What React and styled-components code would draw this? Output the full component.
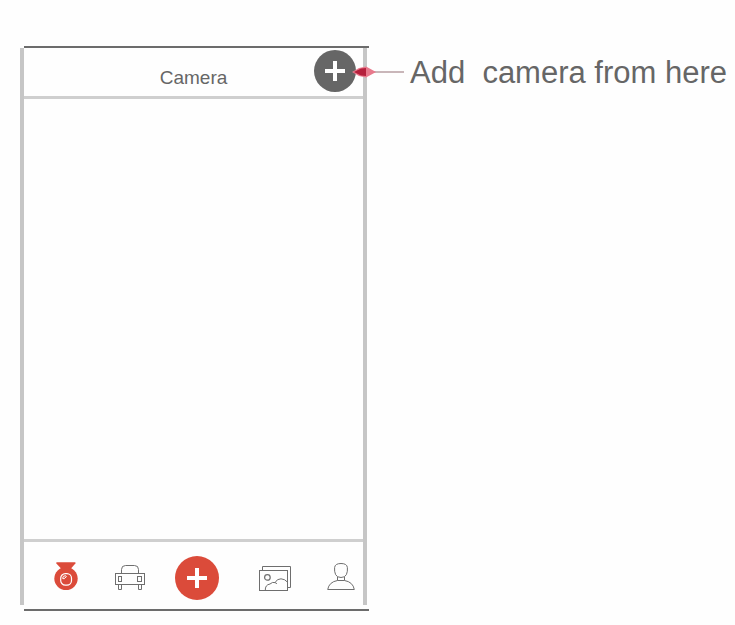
import React from "react";
import styled, { createGlobalStyle } from "styled-components";

function CameraIcon() {
  return (
    <Drawing width="24" height="32" viewBox="0 0 24 32" aria-hidden="true">
      <g fill="#db4b3a">
        <path d="M2.4 0.2H21.4V1.6L17 6.4H7L2.4 1.6Z" />
        <ellipse cx="12" cy="16.6" rx="11.7" ry="11.5" />
      </g>
      <g fill="none" stroke="#fff">
        <rect x="6.7" y="11.7" width="10.8" height="11.4" rx="4.6" strokeWidth="1.2" />
        <path d="M8.6 16.4Q8.8 13.6 11.6 13.7Q12.8 14 12 15.2Q10.6 15.6 10.2 16.8Z" strokeWidth="1" />
      </g>
    </Drawing>
  );
}

function CarIcon() {
  return (
    <Drawing width="30" height="32" viewBox="0 0 30 32" aria-hidden="true">
      <g fill="none" stroke="#6e6e6e" strokeWidth="1">
        <path d="M6.5 11.5V7.5Q6.5 3.5 10.5 3.5H19.5Q23.5 3.5 23.5 7.5V11.5" />
        <rect x="0.5" y="11.5" width="29" height="11" />
        <rect x="3.5" y="14.5" width="3" height="5" />
        <rect x="22.5" y="14.5" width="4" height="5" />
        <path d="M3.5 22.5V27.5H6.5V22.5M23.5 22.5V27.5H26.5V22.5" />
      </g>
    </Drawing>
  );
}

function GalleryIcon() {
  return (
    <Drawing width="32" height="32" viewBox="0 0 32 32" aria-hidden="true">
      <g fill="none" stroke="#6e6e6e" strokeWidth="1">
        <path d="M3.5 8.5V4.5H31.5V25.5H28.5" />
        <rect x="0.5" y="8.5" width="28" height="20" />
        <circle cx="8.4" cy="15.4" r="2.8" strokeWidth="1.2" />
        <path d="M6.3 28.5Q6 22.8 11 22Q13.6 19.6 16 20.6Q18 16.7 22 16.8Q26 17 28.5 20.2M16 20.6Q17.4 21 18 22" />
      </g>
    </Drawing>
  );
}

function PersonIcon() {
  return (
    <Drawing width="28" height="32" viewBox="0 0 28 32" aria-hidden="true">
      <g fill="none" stroke="#6e6e6e" strokeWidth="1">
        <path d="M7.6 5.6Q8 1.5 14 1.5T20.4 5.6Q20.8 9.4 19.4 12.6Q18 15.5 14 15.5T8.6 12.6Q7.2 9.4 7.6 5.6Z" />
        <path d="M10.5 15V18.5H17.5V15" />
        <path d="M10.5 18.5Q2 20 0.7 27.5H27.3Q26 20 17.5 18.5" />
      </g>
    </Drawing>
  );
}

function PlusIcon() {
  return (
    <Drawing width="20" height="20" viewBox="0 0 20 20" aria-hidden="true">
      <path d="M10 0V20M0 10H20" stroke="#fff" strokeWidth="4" />
    </Drawing>
  );
}

function App() {
  return (
    <Page>
      <GlobalStyle />
      <Phone>
        <Edge />
        <Screen>
          <Header>
            <Title>Camera</Title>
            <RoundButton type="button" $color="#666666" $align="end" aria-label="Add camera">
              <PlusIcon />
            </RoundButton>
          </Header>
          <Content />
          <TabBar>
            <TabButton type="button" aria-label="Cameras">
              <CameraIcon />
            </TabButton>
            <TabButton type="button" aria-label="Vehicles">
              <CarIcon />
            </TabButton>
            <RoundButton type="button" $color="#db4b3a" aria-label="Add">
              <PlusIcon />
            </RoundButton>
            <TabButton type="button" aria-label="Gallery">
              <GalleryIcon />
            </TabButton>
            <TabButton type="button" aria-label="Profile">
              <PersonIcon />
            </TabButton>
          </TabBar>
        </Screen>
        <Edge />
      </Phone>
      <Callout>
        <Drawing width="52" height="14" viewBox="0 0 52 14" aria-hidden="true">
          <path d="M14 7H52" stroke="#c9b6b9" strokeWidth="2" />
          <path d="M0 7L7 3L14 1.5L24 7L14 12.5L7 11Z" fill="#e8798c" />
          <path d="M2 7L9 3.5L14 3V11L9 10.5Z" fill="#b5203c" />
        </Drawing>
        <CalloutText>{"Add  camera from here"}</CalloutText>
      </Callout>
    </Page>
  );
}

const GlobalStyle = createGlobalStyle`
  * {
    box-sizing: border-box;
  }

  body {
    margin: 0;
    background-color: #fefefe;
    font-family: "Liberation Sans", Arial, sans-serif;
    color: #666666;
  }
`;

const Page = styled.main`
  display: grid;
  grid-template-columns: minmax(0, 349fr) minmax(0, 366fr);
  min-height: 100vh;
  padding: 46px 0 14px 20px;
`;

const Phone = styled.section`
  display: flex;
  flex-direction: column;
`;

const Edge = styled.div`
  height: 2px;
  margin-left: 4px;
  background-color: #6c6c6c;
`;

const Screen = styled.div`
  display: flex;
  flex-direction: column;
  flex: 1;
  margin-right: 2px;
  margin-bottom: 4px;
  border: solid #c6c6c6;
  border-width: 0 4px;
`;

const Header = styled.header`
  display: grid;
  grid-template-columns: 1fr auto 1fr;
  align-items: center;
  height: 51px;
  padding: 0 7px 2px;
  border-bottom: 3px solid #cfcfcf;
`;

const Title = styled.h1`
  grid-column: 2;
  margin: 0;
  padding-top: 14px;
  font-size: 19px;
  font-weight: normal;
  line-height: 24px;
`;

const Content = styled.div`
  flex: 1;
`;

const TabBar = styled.nav`
  display: grid;
  grid-template-columns: 60fr 68fr 66fr 89fr 44fr;
  align-items: center;
  justify-items: center;
  height: 66px;
  padding: 9px 0 0 12px;
  border-top: 3px solid #cfcfcf;
`;

const RoundButton = styled.button`
  display: flex;
  align-items: center;
  justify-content: center;
  justify-self: ${(props) => props.$align || "center"};
  width: 42px;
  height: 42px;
  padding: 0;
  border: 0;
  border-radius: 50%;
  background-color: ${(props) => props.$color};
  cursor: pointer;

  ${TabBar} & {
    width: 44px;
    height: 44px;
  }
`;

const TabButton = styled.button`
  padding: 0;
  border: 0;
  background: none;
  cursor: pointer;
`;

const Drawing = styled.svg`
  display: block;
  flex: none;
`;

const Callout = styled.aside`
  position: relative;
  display: flex;
  align-items: center;
  gap: 6px;
  height: 52px;
  margin-left: -17px;
`;

const CalloutText = styled.p`
  margin: 0;
  padding-top: 2px;
  font-size: 31px;
  line-height: 36px;
  white-space: pre;
`;

export default App;
